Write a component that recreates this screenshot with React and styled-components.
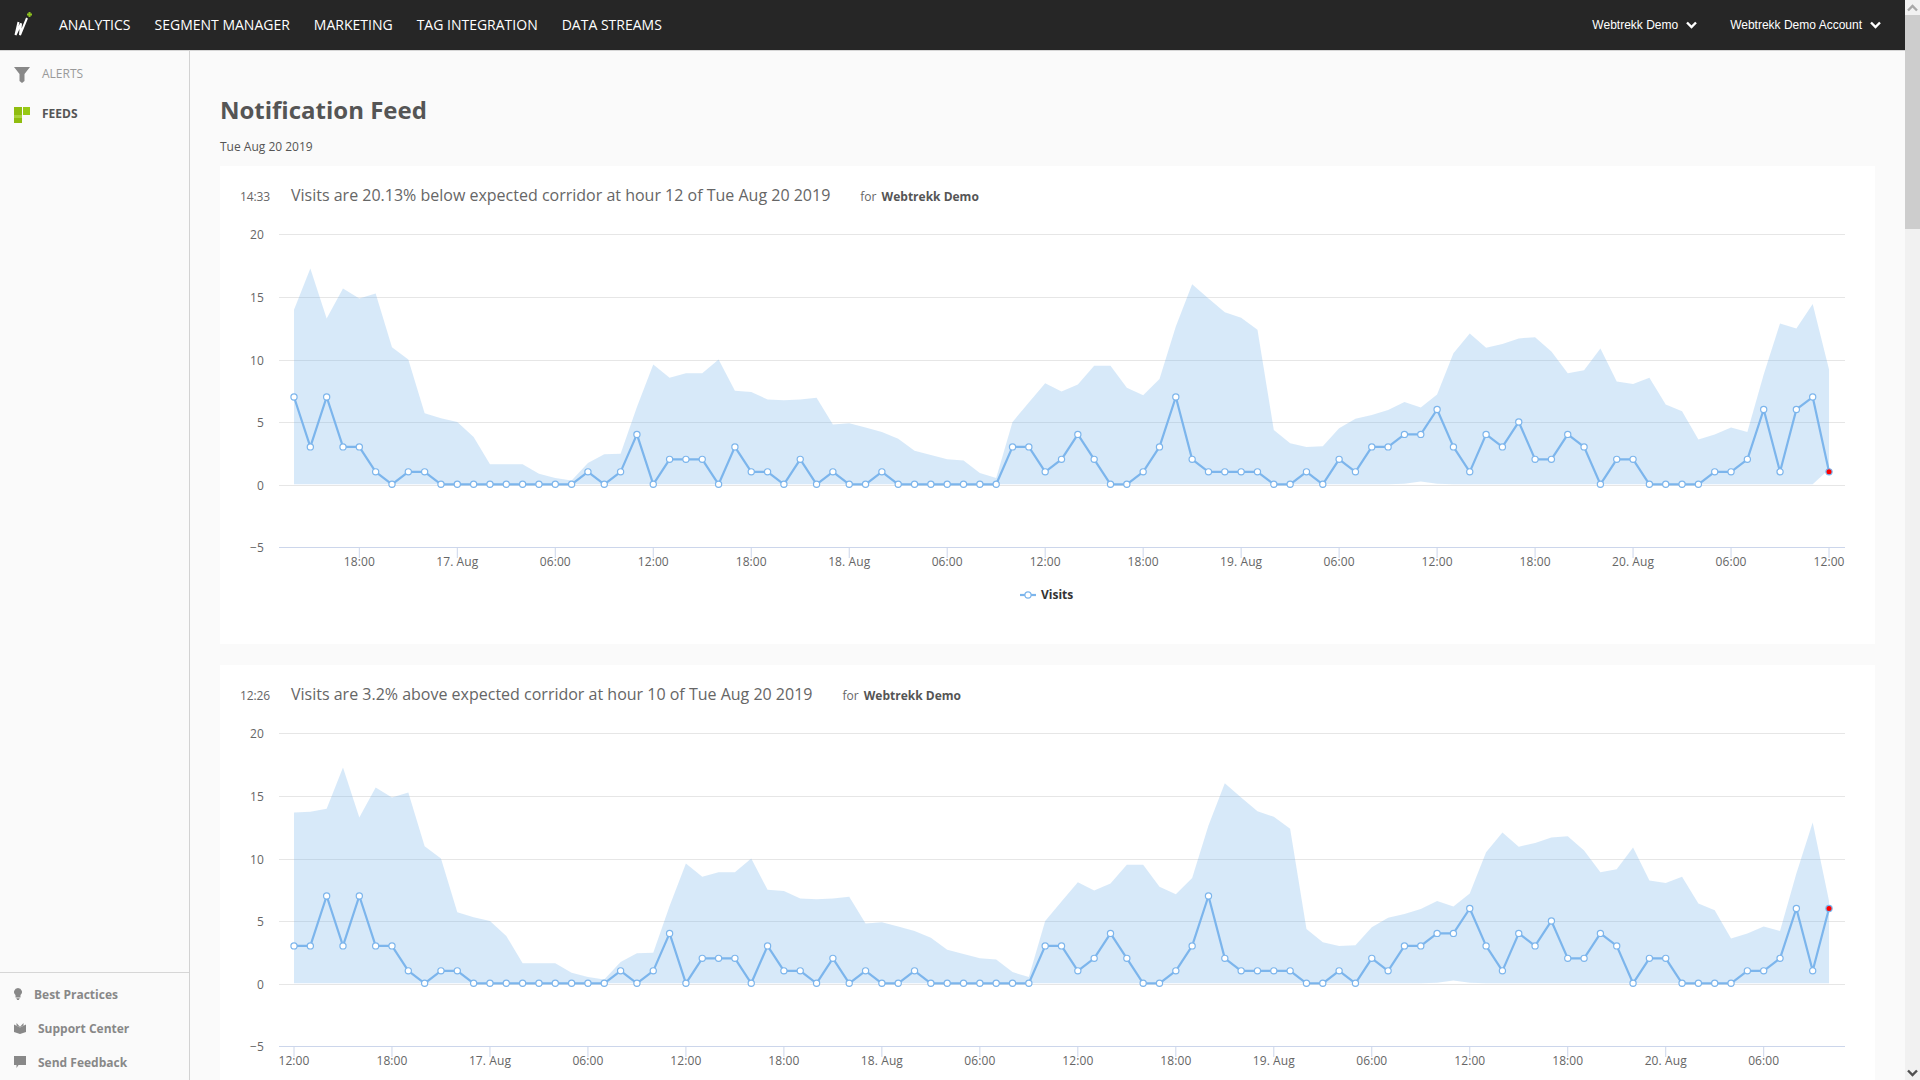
import styled, { createGlobalStyle } from "styled-components";

const GlobalStyle = createGlobalStyle`
  html, body {
    margin: 0;
    height: 100%;
    overflow: hidden;
    background: #fafafa;
    font-family: "Open Sans", sans-serif;
  }
`;

const Page = styled.div`
  display: flex;
  width: 100%;
  height: 100vh;
  overflow: hidden;
`;
const Frame = styled.div`
  flex: 1;
  min-width: 0;
  display: flex;
  flex-direction: column;
`;

/* top bar */
const TopBar = styled.header`
  flex: none;
  height: 48px;
  display: flex;
  align-items: center;
  padding: 0 24px 2px 13px;
  background: #262626;
  border-bottom: 1px solid #d6d6d6;
`;
const Logo = styled.svg`
  width: 20px;
  height: 30px;
  margin-right: 26px;
  margin-top: -6px;
`;
const NavLink = styled.a`
  font-size: 14px;
  color: #fff;
  margin-right: 24px;
  white-space: nowrap;
`;
const Right = styled.div`
  margin-left: auto;
  margin-top: 1px;
  display: flex;
  align-items: center;
  gap: 33px;
`;
const Picker = styled.div`
  display: flex;
  align-items: center;
  gap: 8px;
  font-family: "Liberation Sans", Arial, sans-serif;
  font-size: 12px;
  color: #fff;
`;
const Chevron = styled.svg`
  width: 11px;
  height: 8px;
  fill: none;
  stroke: ${(p) => p.$color || "#fff"};
  stroke-width: 2.4;
  ${(p) => p.$up && "transform: rotate(180deg);"}
`;

/* sidebar */
const Body = styled.div`
  flex: 1;
  min-height: 0;
  display: flex;
`;
const Sidebar = styled.aside`
  flex: none;
  width: 189px;
  display: flex;
  flex-direction: column;
  justify-content: space-between;
  padding-top: 2px;
  border-right: 1px solid #d2d2d2;
`;
const SideItem = styled.div`
  height: 40px;
  display: flex;
  align-items: center;
  gap: 12px;
  padding-left: 14px;
  font-size: 12px;
  font-weight: ${(p) => (p.$active ? 700 : 400)};
  color: ${(p) => (p.$active ? "#555" : "#999")};
`;
const SideIcon = styled.svg`
  flex: none;
  fill: #888;
  margin-top: 3px;
`;
const SideFoot = styled.div`
  border-top: 1px solid #d6d6d6;
  padding: 4px 0 1px;
`;
const FootItem = styled.div`
  height: 34px;
  display: flex;
  align-items: center;
  gap: 12px;
  padding-left: 14px;
  font-size: 12px;
  font-weight: 700;
  color: #888;
`;
const Glyph = styled.svg`
  flex: none;
  fill: #888;
`;

/* content */
const Main = styled.main`
  flex: 1;
  min-width: 0;
  padding: 43px 30px 0;
`;
const Title = styled.h1`
  margin: 0 0 13px;
  font-size: 24px;
  line-height: 32px;
  font-weight: 700;
  color: #555;
`;
const DateLine = styled.div`
  margin-bottom: 11px;
  font-size: 12px;
  line-height: 16px;
  color: #555;
`;
const Card = styled.section`
  height: 478px;
  margin-bottom: 21px;
  background: #fff;
`;
const CardHead = styled.div`
  height: 60px;
  display: flex;
  align-items: center;
  padding-left: 20px;
  color: #666;
`;
const Time = styled.span`
  width: 51px;
  font-size: 12px;
  letter-spacing: -0.1px;
`;
const Message = styled.span`
  font-size: 16px;
  margin: -2px 30px 0 0;
`;
const Source = styled.span`
  font-size: 12px;
  strong {
    margin-left: 2px;
    color: #555;
    font-weight: 700;
  }
`;

/* chart */
const ChartSvg = styled.svg`
  display: block;
  font-family: "Open Sans", sans-serif;
`;
const GridLine = styled.line`
  stroke: #e6e6e6;
  stroke-width: 1;
`;
const AxisLine = styled.line`
  stroke: #ccd6eb;
  stroke-width: 1;
`;
const AxisLabel = styled.text`
  font-size: 12px;
  letter-spacing: 0.1px;
  fill: #666;
`;
const Band = styled.polygon`
  fill: #7cb5ec;
  fill-opacity: 0.3;
`;
const Series = styled.polyline`
  fill: none;
  stroke: #7cb5ec;
  stroke-width: 2.2;
  stroke-linejoin: round;
`;
const Dot = styled.circle`
  fill: ${(p) => (p.$alert ? "#f00" : "#fff")};
  stroke: #7cb5ec;
  stroke-width: 1.2;
`;
const LegendText = styled.text`
  font-size: 12px;
  font-weight: 700;
  fill: #333;
`;

/* scrollbar */
const ScrollTrack = styled.div`
  flex: none;
  width: 15px;
  display: flex;
  flex-direction: column;
  background: #f1f1f1;
`;
const ScrollButton = styled.div`
  height: 15px;
  display: flex;
  align-items: center;
  justify-content: center;
  ${(p) => p.$end && "margin-top: auto;"}
`;
const ScrollThumb = styled.div`
  height: 214px;
  background: #cdcdcd;
`;

const visits = [
  7, 3, 7, 3, 3, 1, 0, 1, 1, 0, 0, 0, 0, 0, 0, 0, 0, 0, 1, 0, 1, 4, 0, 2, 2, 2, 0, 3, 1, 1, 0, 2,
  0, 1, 0, 0, 1, 0, 0, 0, 0, 0, 0, 0, 3, 3, 1, 2, 4, 2, 0, 0, 1, 3, 7, 2, 1, 1, 1, 1, 0, 0, 1, 0,
  2, 1, 3, 3, 4, 4, 6, 3, 1, 4, 3, 5, 2, 2, 4, 3, 0, 2, 2, 0, 0, 0, 0, 1, 1, 2, 6, 1, 6, 7, 1,
];
const upper = [
  14, 17.3, 13.3, 15.7, 14.9, 15.3, 11, 10, 5.7, 5.3, 5, 3.8, 1.6, 1.6, 1.6, 0.85, 0.5, 0.3, 1.7,
  2.4, 2.45, 6.2, 9.6, 8.55, 8.9, 8.9, 10, 7.5, 7.4, 6.8, 6.75, 6.8, 6.95, 4.8, 4.9, 4.55, 4.2,
  3.65, 2.7, 2.35, 2, 1.9, 0.9, 0.5, 5, 6.55, 8.1, 7.45, 8, 9.5, 9.5, 7.75, 7.15, 8.45, 12.65,
  16.05, 14.9, 13.8, 13.35, 12.4, 4.35, 3.3, 3, 3.05, 4.5, 5.25, 5.55, 5.95, 6.6, 6.15, 7.2, 10.5,
  12.1, 10.95, 11.25, 11.7, 11.8, 10.65, 8.9, 9.15, 10.9, 8.25, 8.05, 8.55, 6.4, 5.85, 3.6, 4,
  4.55, 4.2, 8.8, 12.9, 12.5, 14.45, 9.2,
];
const lower = upper.map((_, i) => (i === 94 ? 1.2 : i === 69 ? 0.22 : i === 68 || i === 70 ? 0.05 : 0));

const X0 = 74;
const STEP = 16.33;
const xAt = (i) => X0 + i * STEP;
const yAt = (v) => 258.3 - v * 12.47;
const GRID = [
  ["20", 8.5],
  ["15", 71.5],
  ["10", 134.5],
  ["5", 196.5],
  ["0", 259.5],
];

const Chart = ({ points, top, bottom, ticks, tickStart, legend }) => {
  const line = points.map((v, i) => `${xAt(i)},${yAt(v)}`).join(" ");
  const band = [
    ...top.map((v, i) => `${xAt(i)},${yAt(v)}`),
    ...bottom.map((v, i) => `${xAt(i)},${yAt(v)}`).reverse(),
  ].join(" ");
  return (
    <ChartSvg width="1655" height="418" viewBox="0 0 1655 418">
      {GRID.map(([label, y]) => (
        <g key={label}>
          <GridLine x1="59" x2="1625" y1={y} y2={y} />
          <AxisLabel x="44" y={y + 4} textAnchor="end">
            {label}
          </AxisLabel>
        </g>
      ))}
      <AxisLine x1="59" x2="1625" y1="321.5" y2="321.5" />
      <AxisLabel x="44" y="325.5" textAnchor="end">
        −5
      </AxisLabel>
      <Band points={band} />
      <Series points={line} />
      {points.map((v, i) => (
        <Dot key={i} cx={xAt(i)} cy={yAt(v)} r="3.1" $alert={i === points.length - 1} />
      ))}
      {ticks.map((label, i) => {
        const x = xAt(tickStart + i * 6);
        return (
          <g key={i}>
            <AxisLine x1={x} x2={x} y1="322" y2="332" />
            <AxisLabel x={x} y="340" textAnchor="middle">
              {label}
            </AxisLabel>
          </g>
        );
      })}
      {legend && (
        <g>
          <Series points="800,369 816,369" />
          <Dot cx="808" cy="369" r="3.1" />
          <LegendText x="821" y="373">
            Visits
          </LegendText>
        </g>
      )}
    </ChartSvg>
  );
};

const ticksOne = [
  "18:00", "17. Aug", "06:00", "12:00", "18:00", "18. Aug", "06:00", "12:00",
  "18:00", "19. Aug", "06:00", "12:00", "18:00", "20. Aug", "06:00", "12:00",
];
const ticksTwo = [
  "12:00", "18:00", "17. Aug", "06:00", "12:00", "18:00", "18. Aug", "06:00",
  "12:00", "18:00", "19. Aug", "06:00", "12:00", "18:00", "20. Aug", "06:00",
];

const feed = [
  {
    time: "14:33",
    text: "Visits are 20.13% below expected corridor at hour 12 of Tue Aug 20 2019",
    points: visits,
    top: upper,
    bottom: lower,
    ticks: ticksOne,
    tickStart: 4,
    legend: true,
  },
  {
    time: "12:26",
    text: "Visits are 3.2% above expected corridor at hour 10 of Tue Aug 20 2019",
    points: [3, 3, ...visits.slice(0, 93)],
    top: [13.7, 13.75, ...upper.slice(0, 92), 6.6],
    bottom: [0, 0, ...lower.slice(0, 92), 0],
    ticks: ticksTwo,
    tickStart: 0,
    legend: false,
  },
];

const Down = ({ color, up }) => (
  <Chevron viewBox="0 0 11 8" $color={color} $up={up}>
    <path d="M1 1.500l4.500 4.500L10 1.500" />
  </Chevron>
);

const App = () => {
  return (
    <Page>
      <GlobalStyle />
      <Frame>
        <TopBar>
          <Logo viewBox="0 0 20 30">
            <path d="M5.500 16L2.500 29 8 17.500 7 29l7-17" fill="none" stroke="#fff" strokeWidth="2" />
            <path d="M16.500 6v5M14 8.500h5" stroke="#8dc21f" strokeWidth="2" />
          </Logo>
          <NavLink>ANALYTICS</NavLink>
          <NavLink>SEGMENT MANAGER</NavLink>
          <NavLink>MARKETING</NavLink>
          <NavLink>TAG INTEGRATION</NavLink>
          <NavLink>DATA STREAMS</NavLink>
          <Right>
            <Picker>
              Webtrekk Demo <Down />
            </Picker>
            <Picker>
              Webtrekk Demo Account <Down />
            </Picker>
          </Right>
        </TopBar>
        <Body>
          <Sidebar>
            <div>
              <SideItem>
                <SideIcon width="16" height="16" viewBox="0 0 16 16">
                  <path d="M0 0h16l-5.500 7v7L8 16l-2.500-2V7z" />
                </SideIcon>
                ALERTS
              </SideItem>
              <SideItem $active>
                <SideIcon width="16" height="16" viewBox="0 0 16 16">
                  <path d="M0 0h8v8H0z" fill="#8fbc0f" />
                  <path d="M9 0h7v8H9z" fill="#97c914" />
                  <path d="M0 8h8v3H0z" fill="#a9d23a" />
                  <path d="M0 11h8v5H0z" fill="#8fbc0f" />
                </SideIcon>
                FEEDS
              </SideItem>
            </div>
            <SideFoot>
              <FootItem>
                <Glyph width="8" height="12" viewBox="0 0 8 12">
                  <path d="M4 0a4 4 0 0 1 2.500 7.100V9.500h-5V7.100A4 4 0 0 1 4 0zM2.200 10.300h3.600L4.800 12H3.200z" />
                </Glyph>
                Best Practices
              </FootItem>
              <FootItem>
                <Glyph width="12" height="11" viewBox="0 0 12 11">
                  <path d="M0 1.500L3 3l3 1.500L9 3l3-1.500V9L6 11 0 9zM2.500 0L5.700 3.500h.6L9.500 0v2.500L6 4.300 2.500 2.500z" />
                </Glyph>
                Support Center
              </FootItem>
              <FootItem>
                <Glyph width="12" height="12" viewBox="0 0 12 12">
                  <path d="M0 0h12v9H4.500L2.500 12V9H0z" />
                </Glyph>
                Send Feedback
              </FootItem>
            </SideFoot>
          </Sidebar>
          <Main>
            <Title>Notification Feed</Title>
            <DateLine>Tue Aug 20 2019</DateLine>
            {feed.map((item) => (
              <Card key={item.time}>
                <CardHead>
                  <Time>{item.time}</Time>
                  <Message>{item.text}</Message>
                  <Source>
                    for <strong>Webtrekk Demo</strong>
                  </Source>
                </CardHead>
                <Chart
                  points={item.points}
                  top={item.top}
                  bottom={item.bottom}
                  ticks={item.ticks}
                  tickStart={item.tickStart}
                  legend={item.legend}
                />
              </Card>
            ))}
          </Main>
        </Body>
      </Frame>
      <ScrollTrack>
        <ScrollButton>
          <Down color="#a8a8a8" up />
        </ScrollButton>
        <ScrollThumb />
        <ScrollButton $end>
          <Down color="#505050" />
        </ScrollButton>
      </ScrollTrack>
    </Page>
  );
};

export default App;
